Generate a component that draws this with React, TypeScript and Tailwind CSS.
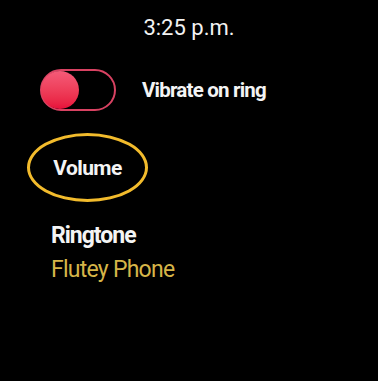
import React from "react";

const font = { fontFamily: "Roboto, 'Liberation Sans', sans-serif" };

function Toggle() {
  return (
    <div className="relative h-[42px] w-[76px] rounded-full border-2 border-[#d84262]">
      <div className="absolute left-[-1px] top-[0px] h-[38px] w-[38px] rounded-full bg-gradient-to-b from-[#f45a78] to-[#e80c3a]" />
    </div>
  );
}

export default function App() {
  return (
    <div className="h-[381px] w-[378px] overflow-hidden bg-black text-white" style={font}>
      <div className="pt-[15px] text-center text-[22px] leading-[26px] text-[#f2f2f2]">3:25 p.m.</div>

      <div className="mt-[28px] flex items-center pl-[40px]">
        <Toggle />
        <span className="ml-[26px] text-[20.5px] font-bold leading-[24px] tracking-[-0.8px] text-[#f4f4f4]">
          Vibrate on ring
        </span>
      </div>

      <div className="ml-[27px] mt-[22px] flex h-[69px] w-[121px] items-center justify-center rounded-[50%] border-[3px] border-[#f2bb2c]">
        <span className="text-[21px] font-bold leading-[24px] tracking-[-0.6px] text-[#f4f4f4]">Volume</span>
      </div>

      <div className="mt-[20px] flex flex-col gap-[6px] pl-[51px]">
        <span className="text-[23px] font-bold leading-[28px] tracking-[-1px] text-[#f4f4f4]">Ringtone</span>
        <span className="text-[23px] leading-[28px] tracking-[-0.75px] text-[#d6b548]">Flutey Phone</span>
      </div>
    </div>
  );
}
